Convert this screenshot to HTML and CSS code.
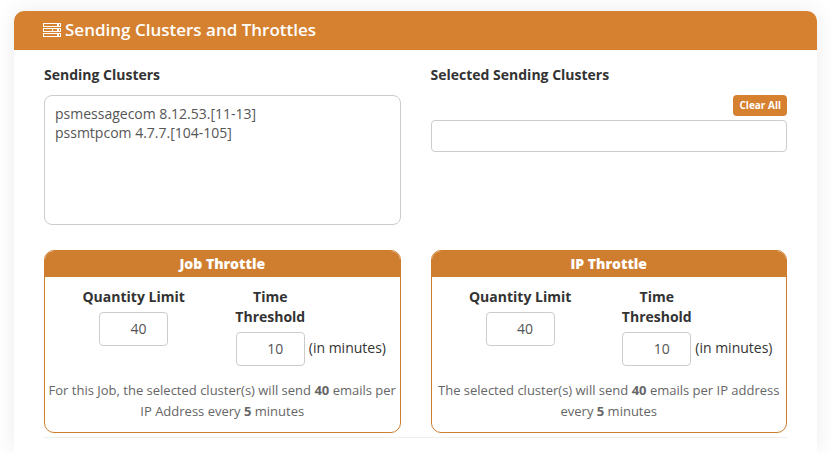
FILE: index.html
```html
<!DOCTYPE html>
<html lang="en">
<head>
    <meta charset="UTF-8">
    <meta name="viewport" content="width=device-width, initial-scale=1.0">
    <title>Sending Clusters and Throttles</title>
    <link rel="stylesheet" href="styles.css">
</head>

<body>
    <section class="panel">
        <header class="panel-heading">
            <svg class="icon-server" viewBox="0 0 18 14" aria-hidden="true">
                <g fill="none" stroke="#fff">
                    <rect x="0.5" y="0.5" width="17" height="3"/>
                    <rect x="0.5" y="5.5" width="17" height="3"/>
                    <rect x="0.5" y="10.5" width="17" height="3"/>
                </g>
                <g fill="#fff">
                    <rect x="14" y="1" width="2" height="2"/>
                    <rect x="9" y="6" width="1" height="2"/>
                    <rect x="14" y="6" width="2" height="2"/>
                    <rect x="14" y="11" width="2" height="2"/>
                </g>
            </svg>
            <h1>Sending Clusters and Throttles</h1>
        </header>

        <div class="panel-body">
            <div class="row">
                <div class="col">
                    <label class="field-label" for="clusters">Sending Clusters</label>
                    <select class="cluster-list" id="clusters" multiple>
                        <option>psmessagecom 8.12.53.[11-13]</option>
                        <option>pssmtpcom 4.7.7.[104-105]</option>
                    </select>
                </div>
                <div class="col">
                    <label class="field-label" for="selected">Selected Sending Clusters</label>
                    <button class="btn-clear" type="button">Clear All</button>
                    <input class="selected-clusters" type="text" id="selected">
                </div>
            </div>

            <div class="row throttles">
                <div class="throttle">
                    <h2>Job Throttle</h2>
                    <div class="throttle-fields">
                        <div class="field">
                            <label for="jobLimit">Quantity Limit</label>
                            <input type="number" id="jobLimit" value="40">
                        </div>
                        <div class="time">
                            <div class="field">
                                <label for="jobTime">Time Threshold</label>
                                <input type="number" id="jobTime" value="10">
                            </div>
                            <span class="unit">(in minutes)</span>
                        </div>
                    </div>
                    <p>For this Job, the selected cluster(s) will send <b>40</b> emails per IP Address every <b>5</b> minutes</p>
                </div>
                <div class="throttle">
                    <h2>IP Throttle</h2>
                    <div class="throttle-fields">
                        <div class="field">
                            <label for="ipLimit">Quantity Limit</label>
                            <input type="number" id="ipLimit" value="40">
                        </div>
                        <div class="time">
                            <div class="field">
                                <label for="ipTime">Time Threshold</label>
                                <input type="number" id="ipTime" value="10">
                            </div>
                            <span class="unit">(in minutes)</span>
                        </div>
                    </div>
                    <p>The selected cluster(s) will send <b>40</b> emails per IP address every <b>5</b> minutes</p>
                </div>
            </div>
            <hr>
        </div>
    </section>
</body>

</html>
```

FILE: styles.css
```css
/* General styles */
* {
    box-sizing: border-box;
}

body {
    font-family: "Open Sans", sans-serif;
    font-size: 14px;
    line-height: 20px;
    margin: 0;
    padding: 11px 14px 0;
    background-color: #fff;
    color: #333;
}

input,
select,
button {
    font-family: inherit;
    font-size: 14px;
    color: #555;
    background-color: #fff;
    border: 1px solid #ccc;
    border-radius: 4px;
}

/* Panel */
.panel {
    min-height: calc(100vh - 11px);
    border-radius: 10px 10px 0 0;
    background-color: #fff;
    box-shadow: 0 0 24px rgba(0, 0, 0, 0.08);
}

.panel-heading {
    display: flex;
    align-items: center;
    gap: 4px;
    padding: 7px 30px 9px 29px;
    border-radius: 10px 10px 0 0;
    background-color: #d58130;
    color: #fff;
}

.panel-heading h1 {
    margin: 0;
    font-size: 17px;
    font-weight: 600;
    line-height: 23px;
}

.icon-server {
    width: 18px;
    height: 14px;
}

.panel-body {
    padding: 15px 30px;
}

.row {
    display: grid;
    grid-template-columns: 1fr 1fr;
    gap: 30px;
}

.col {
    display: flex;
    flex-direction: column;
}

.field-label {
    margin-bottom: 10px;
    font-weight: 700;
}

/* Clusters */
.cluster-list {
    height: 130px;
    padding: 8px;
    border-radius: 8px;
    overflow: hidden;
}

.cluster-list option {
    min-height: 19px;
    padding: 0 2px;
    line-height: 19px;
}

.btn-clear {
    align-self: flex-end;
    margin-bottom: 4px;
    padding: 0 6px;
    border: none;
    background-color: #d58130;
    color: #fff;
    font-size: 10px;
    font-weight: 700;
    line-height: 21px;
    cursor: pointer;
}

.selected-clusters {
    width: 100%;
    height: 32px;
    padding: 0 10px;
}

/* Throttles */
.throttles {
    margin-top: 25px;
}

.throttle {
    border: 1px solid #cf7e2f;
    border-radius: 10px;
    overflow: hidden;
    text-align: center;
}

.throttle h2 {
    margin: 0;
    padding: 3px 0;
    background-color: #cf7e2f;
    color: #fff;
    font-size: 14px;
    font-weight: 800;
    line-height: 20px;
}

.throttle-fields {
    display: grid;
    grid-template-columns: 1fr 1fr;
    padding-top: 10px;
}

.field {
    display: flex;
    flex-direction: column;
    align-items: center;
    gap: 5px;
}

.field label {
    font-weight: 700;
}

.field input {
    width: 69px;
    height: 34px;
    padding: 0 12px 2px 22px;
    text-align: center;
    appearance: textfield;
}

.field input::-webkit-inner-spin-button {
    display: none;
}

.time {
    display: flex;
    justify-content: center;
    align-items: flex-end;
    gap: 4px;
}

.time .field {
    width: 69px;
}

.unit {
    padding-bottom: 8px;
}

.throttle p {
    margin: 14px 0 10px;
    color: #666;
    font-size: 13px;
    line-height: 21px;
}

hr {
    margin: 4px 0 0;
    border: none;
    border-top: 1px solid #eee;
}
```
